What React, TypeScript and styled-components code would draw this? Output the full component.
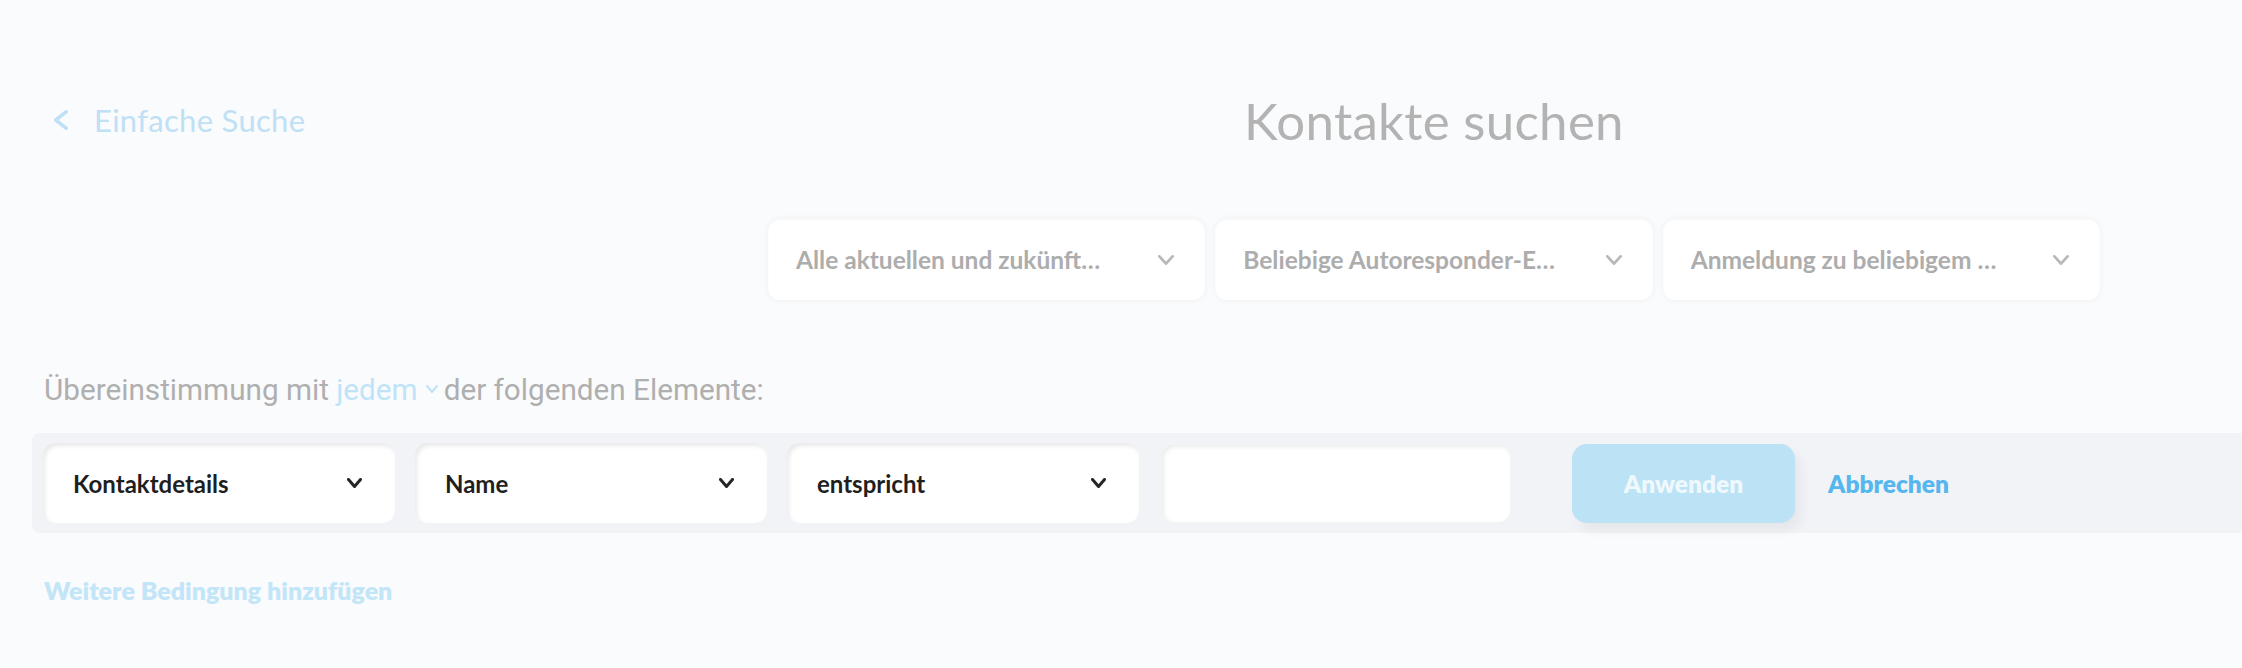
import React from "react";
import styled, { createGlobalStyle } from "styled-components";

const GlobalStyle = createGlobalStyle`
  html, body { margin: 0; padding: 0; background: #fafbfd; }
  body { font-family: Lato, "Open Sans", sans-serif; overflow: hidden; }
  * { box-sizing: border-box; }
`;

const Page = styled.div`
  width: 2242px;
  height: 668px;
  padding-top: 80px;
  background: #fafbfd;
`;

const TopGrid = styled.div`
  display: grid;
  grid-template-columns: 768px 1332px;
  grid-template-rows: 80px auto;
  row-gap: 59px;
`;

const BackLink = styled.a`
  display: flex;
  align-items: center;
  gap: 26px;
  padding-left: 54px;
  color: #bfe0f5;
  font-family: Lato, sans-serif;
  font-size: 31px;
  font-weight: 400;
  text-decoration: none;
  letter-spacing: 0.3px;
`;

const Title = styled.h1`
  margin: 0;
  display: flex;
  align-items: center;
  justify-content: center;
  font-family: Lato, sans-serif;
  font-weight: 400;
  font-size: 51px;
  color: #b3b3b3;
  letter-spacing: 0.3px;
`;

const FilterRow = styled.div`
  grid-column: 2;
  display: grid;
  grid-template-columns: repeat(3, 1fr);
  gap: 10px;
`;

const FilterBox = styled.div`
  height: 81px;
  background: #ffffff;
  border-radius: 12px;
  box-shadow: 0 0 7px rgba(0, 0, 0, 0.05), inset 0 1px 2px rgba(0, 0, 0, 0.03);
  display: flex;
  align-items: center;
  justify-content: space-between;
  padding: 0 31px 0 28px;
  gap: 20px;
`;

const FilterText = styled.span`
  font-family: Lato, sans-serif;
  font-weight: 700;
  font-size: 24.5px;
  color: #adadad;
  white-space: nowrap;
  overflow: hidden;
  text-overflow: ellipsis;
`;

const MatchLine = styled.div`
  margin-top: 74px;
  padding-left: 44px;
  height: 30px;
  display: flex;
  align-items: center;
  font-family: Roboto, sans-serif;
  font-size: 29.7px;
  color: #afafaf;
  white-space: pre;
`;

const MatchSelect = styled.span`
  display: inline-flex;
  align-items: center;
  gap: 8px;
  color: #bfe4f8;
  margin-right: 6px;
`;

const Band = styled.div`
  margin-top: 29px;
  margin-left: 32px;
  height: 100px;
  background: #f1f3f6;
  border-radius: 8px 0 0 8px;
  display: flex;
  align-items: center;
  padding-left: 11px;
  gap: 20px;
`;

const SelectBox = styled.div`
  width: 352px;
  height: 80px;
  background: #ffffff;
  border-radius: 13px;
  box-shadow: inset 2px 3px 4px rgba(0, 0, 0, 0.09);
  display: flex;
  align-items: center;
  justify-content: space-between;
  padding: 0 33px 0 30px;
`;

const SelectText = styled.span`
  font-family: Lato, sans-serif;
  font-weight: 700;
  font-size: 24px;
  color: #1f1f1f;
`;

const TextInput = styled.input`
  width: 348px;
  height: 77px;
  margin-left: 3px;
  background: #ffffff;
  border: none;
  border-radius: 12px;
  box-shadow: inset 2px 2px 4px rgba(0, 0, 0, 0.08);
  outline: none;
`;

const ApplyButton = styled.button`
  margin-left: 42px;
  width: 223px;
  height: 79px;
  border: none;
  border-radius: 15px;
  background: #bbe2f5;
  box-shadow: 6px 8px 12px rgba(0, 0, 0, 0.05);
  color: #eef8fd;
  font-family: Lato, sans-serif;
  font-weight: 800;
  font-size: 24.5px;
`;

const CancelLink = styled.a`
  margin-left: 13px;
  color: #56b7ee;
  font-family: Lato, sans-serif;
  font-weight: 800;
  font-size: 24.5px;
`;

const AddCondition = styled.a`
  display: block;
  margin-top: 43px;
  padding-left: 44px;
  height: 28px;
  line-height: 28px;
  color: #c3e5f8;
  font-family: Lato, sans-serif;
  font-weight: 800;
  font-size: 25px;
`;

const Chevron = ({ w, h, color, sw, dir = "down" }: { w: number; h: number; color: string; sw: number; dir?: "down" | "left" }) =>
  dir === "down" ? (
    <svg width={w} height={h} viewBox={`0 0 ${w} ${h}`} fill="none">
      <polyline points={`${sw / 2},${sw / 2} ${w / 2},${h - sw / 2} ${w - sw / 2},${sw / 2}`} stroke={color} strokeWidth={sw} strokeLinecap="round" strokeLinejoin="round" />
    </svg>
  ) : (
    <svg width={w} height={h} viewBox={`0 0 ${w} ${h}`} fill="none">
      <polyline points={`${w - sw / 2},${sw / 2} ${sw / 2},${h / 2} ${w - sw / 2},${h - sw / 2}`} stroke={color} strokeWidth={sw} strokeLinecap="round" strokeLinejoin="round" />
    </svg>
  );

const filters = ["Alle aktuellen und zukünft…", "Beliebige Autoresponder-E…", "Anmeldung zu beliebigem …"];
const selects = ["Kontaktdetails", "Name", "entspricht"];

export default function App() {
  return (
    <>
      <GlobalStyle />
      <Page>
        <TopGrid>
          <BackLink>
            <Chevron w={14} h={20} color="#bfe0f5" sw={3.5} dir="left" />
            Einfache Suche
          </BackLink>
          <Title>Kontakte suchen</Title>
          <FilterRow>
            {filters.map((f) => (
              <FilterBox key={f}>
                <FilterText>{f}</FilterText>
                <Chevron w={16} h={10} color="#b8b8b8" sw={2.8} />
              </FilterBox>
            ))}
          </FilterRow>
        </TopGrid>
        <MatchLine>
          {"Übereinstimmung mit "}
          <MatchSelect>
            jedem
            <Chevron w={12} h={8} color="#bfe4f8" sw={2} />
          </MatchSelect>
          {"der folgenden Elemente:"}
        </MatchLine>
        <Band>
          {selects.map((s) => (
            <SelectBox key={s}>
              <SelectText>{s}</SelectText>
              <Chevron w={15} h={10} color="#262626" sw={3} />
            </SelectBox>
          ))}
          <TextInput />
          <ApplyButton>Anwenden</ApplyButton>
          <CancelLink>Abbrechen</CancelLink>
        </Band>
        <AddCondition>Weitere Bedingung hinzufügen</AddCondition>
      </Page>
    </>
  );
}
